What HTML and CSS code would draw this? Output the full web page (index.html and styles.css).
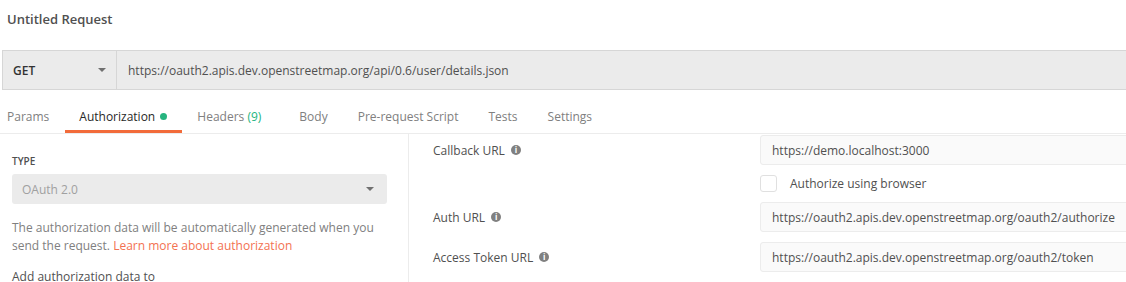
FILE: index.html
```html
<!DOCTYPE html>
<html lang="en">
<head>
  <meta charset="UTF-8">
  <title>Untitled Request</title>
  <link rel="stylesheet" href="styles.css">
</head>
<body>

  <div class="request-title">Untitled Request</div>

  <div class="url-bar">
    <div class="method">
      <span>GET</span>
      <span class="caret"></span>
    </div>
    <div class="url">https://oauth2.apis.dev.openstreetmap.org/api/0.6/user/details.json</div>
  </div>

  <div class="tabs">
    <div class="tab">Params</div>
    <div class="tab active">Authorization <span class="dot"></span></div>
    <div class="tab">Headers <span class="count">(9)</span></div>
    <div class="tab">Body</div>
    <div class="tab">Pre-request Script</div>
    <div class="tab">Tests</div>
    <div class="tab">Settings</div>
  </div>

  <div class="auth">
    <div class="auth-left">
      <div class="section-label">TYPE</div>
      <div class="select">
        <span>OAuth 2.0</span>
        <span class="caret"></span>
      </div>
      <p class="help">The authorization data will be automatically generated when you send the request. <a href="#">Learn more about authorization</a></p>
      <div class="add-to">Add authorization data to</div>
    </div>

    <div class="auth-right">
      <div class="field-label">Callback URL <span class="info">i</span></div>
      <div class="field-input">https://demo.localhost:3000</div>

      <div></div>
      <label class="check"><span class="box"></span>Authorize using browser</label>

      <div class="field-label">Auth URL <span class="info">i</span></div>
      <div class="field-input">https://oauth2.apis.dev.openstreetmap.org/oauth2/authorize</div>

      <div class="field-label">Access Token URL <span class="info">i</span></div>
      <div class="field-input">https://oauth2.apis.dev.openstreetmap.org/oauth2/token</div>
    </div>
  </div>

</body>
</html>
```

FILE: styles.css
```css
body {
  margin: 0;
  font-family: "Open Sans", "Liberation Sans", sans-serif;
  font-size: 12px;
  color: #505050;
  background: #fff;
  overflow: hidden;
}
.request-title {
  padding: 10px 7px 0;
  font-size: 13px;
  font-weight: 600;
  line-height: 18px;
  color: #505050;
}
.url-bar {
  display: flex;
  height: 38px;
  margin: 22px -10px 0 2px;
  background: #ebebeb;
  border: 1px solid #d6d6d6;
  border-right: none;
}
.method {
  width: 114px;
  display: flex;
  align-items: center;
  justify-content: space-between;
  padding: 0 10px 0 10px;
  box-sizing: border-box;
  border-right: 1px solid #d6d6d6;
  font-weight: 600;
  color: #333;
}
.caret {
  width: 0;
  height: 0;
  border-left: 4px solid transparent;
  border-right: 4px solid transparent;
  border-top: 4px solid #707070;
}
.url {
  display: flex;
  align-items: center;
  padding-left: 11px;
  font-size: 12px;
  color: #505050;
}
.tabs {
  display: flex;
  margin-top: 10px;
  padding-left: 7px;
  border-bottom: 1px solid #ececec;
}
.tab {
  padding: 7px 15px 3px;
  height: 33px;
  box-sizing: border-box;
  line-height: 20px;
  color: #808080;
  border-bottom: 3px solid transparent;
}
.tab:first-child {
  padding-left: 0;
}
.tab.active {
  margin-left: 1px;
  padding-left: 14px;
  color: #282828;
  border-bottom-color: #f26b3a;
}
.dot {
  display: inline-block;
  width: 7px;
  height: 7px;
  margin-left: 2px;
  border-radius: 50%;
  background: #26b47f;
  vertical-align: 1px;
}
.count {
  margin-right: 8px;
  color: #26b47f;
}
.auth {
  display: flex;
}
.auth-left {
  width: 409px;
  box-sizing: border-box;
  padding: 20px 21px 0 12px;
  border-right: 1px solid #ececec;
}
.section-label {
  font-size: 10px;
  font-weight: 600;
  line-height: 14px;
  color: #505050;
}
.select {
  display: flex;
  align-items: center;
  justify-content: space-between;
  height: 30px;
  margin-top: 6px;
  padding: 0 13px 0 10px;
  background: #ebebeb;
  border-radius: 3px;
  color: #a0a0a0;
}
.help {
  margin: 15px 0 0;
  line-height: 18px;
  color: #808080;
}
.help a {
  color: #f37151;
  text-decoration: none;
}
.add-to {
  margin-top: 13px;
  line-height: 18px;
  color: #505050;
}
.auth-right {
  flex: 1;
  display: grid;
  grid-template-columns: 327px 1fr;
  row-gap: 10px;
  align-items: center;
  align-content: start;
  padding: 1px 0 0 24px;
  margin-right: -6px;
}
.field-label {
  display: flex;
  align-items: center;
  color: #505050;
}
.info {
  display: inline-flex;
  align-items: center;
  justify-content: center;
  width: 10px;
  height: 10px;
  margin-left: 6px;
  border-radius: 50%;
  background: #808080;
  color: #fff;
  font-size: 8px;
  font-weight: 700;
  line-height: 1;
}
.field-input {
  height: 30px;
  box-sizing: border-box;
  display: flex;
  align-items: center;
  padding-left: 11px;
  background: #fafafa;
  border: 1px solid #ececec;
  border-radius: 3px;
  color: #505050;
}
.check {
  display: flex;
  align-items: center;
  height: 17px;
  color: #505050;
}
.box {
  width: 15px;
  height: 15px;
  margin-right: 13px;
  border: 1px solid #e0e0e0;
  border-radius: 3px;
  background: #fff;
}
```
